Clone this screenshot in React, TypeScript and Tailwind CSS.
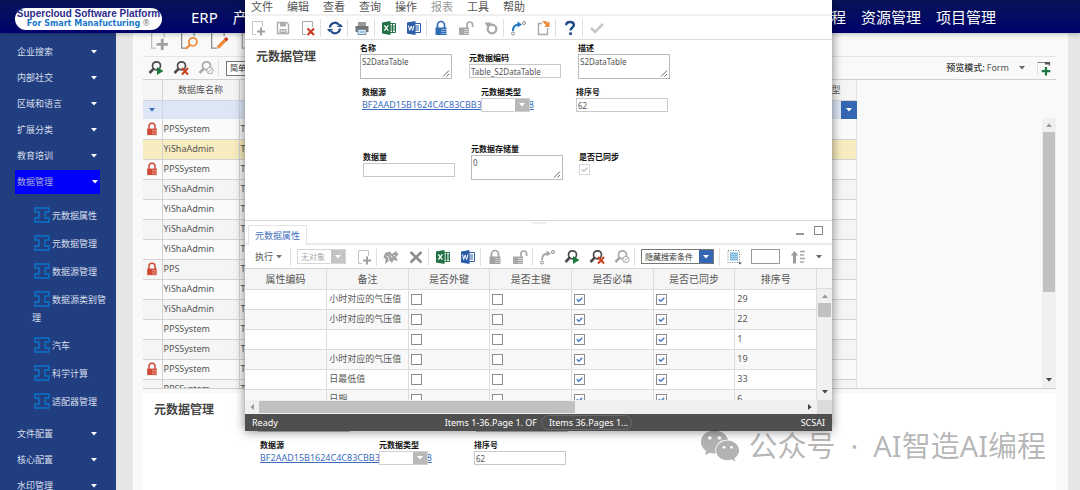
import { useId, type ReactNode } from "react";
import { FaWeixin } from "react-icons/fa";

/* ---------- small drawings ---------- */

function Svg({ className = "size-4", children }: { className?: string; children: ReactNode }) {
  return (
    <svg viewBox="0 0 16 16" fill="none" className={`shrink-0 ${className}`} aria-hidden="true">
      {children}
    </svg>
  );
}

function Caret({ className = "text-[#555]" }: { className?: string }) {
  return (
    <svg viewBox="0 0 6 4" className={`h-1 w-1.5 shrink-0 ${className}`} fill="currentColor" aria-hidden="true">
      <path d="M0 0h6L3 3.6z" />
    </svg>
  );
}

const Doc = () => <path d="M6 14.5H2.5v-13h10V7" stroke="#c4c4c4" />;

const NewIcon = () => (
  <Svg>
    <Doc />
    <path d="M11 7.5v8M7 11.5h8" stroke="#a0a0a0" strokeWidth="2" />
  </Svg>
);
const SaveIcon = () => (
  <Svg>
    <path d="M2.5 2.5h9l2 2v9h-11z" stroke="#adadad" strokeWidth="1.4" />
    <path d="M5 3h6v3.500H5zM4.500 9h7v4.500h-7z" fill="#adadad" />
    <path d="M5.500 11h5" stroke="#fff" />
  </Svg>
);
const DeleteDocIcon = () => (
  <Svg>
    <path d="M6 14.500H2.500v-13h10V7" stroke="#a9a9a9" />
    <path d="M7.500 8.500l6.500 6.500M14 8.500L7.500 15" stroke="#c8371b" strokeWidth="2" />
  </Svg>
);
const RefreshIcon = () => (
  <Svg>
    <path d="M3 7.500a5 5 0 0 1 9-2.700M13 8.500a5 5 0 0 1-9 2.700" stroke="#1f4e86" strokeWidth="2.200" />
    <path d="M9.800 7H16L13.500 3.800zM6.200 9H0l2.500 3.200z" fill="#1f4e86" />
  </Svg>
);
const PrintIcon = () => (
  <Svg>
    <path d="M4 2h8v4H4z" fill="#9b9b9b" />
    <path d="M1.500 6h13v6h-13z" fill="#757575" />
    <path d="M4 9.500h8v5H4z" fill="#e9f1f8" stroke="#6f8ea8" />
    <path d="M5.500 12h5" stroke="#4a90c4" />
  </Svg>
);
function OfficeIcon({ word = false }: { word?: boolean }) {
  const c = word ? "#2a5ca8" : "#217346";
  return (
    <Svg>
      <path d="M9 3.500h5.500v9H9" fill="#fff" stroke={c} />
      <path d={word ? "M9 6h4M9 8h4M9 10h4" : "M9 6h5M9 8h5M9 10h5M11.500 4v8"} stroke={c} />
      <path d="M1 2.500L9.500 1v14L1 13.500z" fill={c} />
      {word ? (
        <path d="M2.500 5.500l1.200 5L5.200 6l1.500 4.500 1.200-5" stroke="#fff" />
      ) : (
        <path d="M3.300 5.300l4 5.400M7.300 5.300l-4 5.400" stroke="#fff" strokeWidth="1.300" />
      )}
    </Svg>
  );
}
function LockIcon({ color, className }: { color: string; className?: string }) {
  return (
    <Svg className={className}>
      <path d="M4.500 8V5a3.500 3.500 0 0 1 7 0v3" stroke={color} strokeWidth="1.700" />
      <path d="M2.500 7.500h11v7.500h-11z" fill={color} />
      <path d="M8 9.500h5.500M8 11.500h5.500M8 13.500h5.500" stroke="#fff" strokeOpacity=".55" strokeWidth=".8" />
    </Svg>
  );
}
const UnlockIcon = () => (
  <Svg>
    <path d="M9 8V4.800a2.800 2.800 0 0 1 5.600 0V7" stroke="#a8a8a8" strokeWidth="1.700" />
    <path d="M1 7.500h10V15H1z" fill="#a8a8a8" />
    <path d="M6 9.500h5M6 11.500h5M6 13.500h5" stroke="#fff" strokeOpacity=".6" strokeWidth=".8" />
  </Svg>
);
const UndoIcon = () => (
  <Svg>
    <circle cx="9" cy="9" r="4.300" stroke="#a8a8a8" strokeWidth="2.300" />
    <path d="M1.500 2.500H8.500L5 8z" fill="#a8a8a8" />
  </Svg>
);
function FlowIcon({ color = "#2277c4" }: { color?: string }) {
  return (
    <Svg>
      <path d="M3 11c0-4 2-6.500 6-6.500" stroke={color} strokeWidth="2" />
      <path d="M7.500 1.500L12 4.500 7.500 7.500z" fill={color} />
      <circle cx="3" cy="13.500" r="1.500" stroke="#8b8b8b" />
      <circle cx="14" cy="3" r="1.500" stroke="#8b8b8b" />
    </Svg>
  );
}
const PasteIcon = () => (
  <Svg>
    <path d="M7 3.500H3.500v11h9V8" stroke="#a9a9a9" strokeWidth="1.400" />
    <path d="M7 1h4l1.500 1.500L14.500 1.500v5.500H9l2-1.500z" fill="#ee8b3c" />
  </Svg>
);
const HelpIcon = () => (
  <Svg>
    <path d="M4.200 5.200C4.200 3 5.800 2 8 2s3.900 1.100 3.900 3.100c0 2.400-3.200 2.500-3.400 5.400" stroke="#1f4a86" strokeWidth="2.400" />
    <path d="M7.200 12.300h2.700V15H7.200z" fill="#1f4a86" />
  </Svg>
);
const CheckIcon = () => (
  <Svg>
    <path d="M2 8l4 4 8-8" stroke="#c6c6c6" strokeWidth="2.600" />
  </Svg>
);
function FindIcon({ kind }: { kind: "play" | "x" | "no" }) {
  const c = kind === "no" ? "#a8a8a8" : "#4a4a4a";
  return (
    <Svg>
      <circle cx="8.500" cy="5.800" r="4" stroke={c} strokeWidth="1.700" />
      <path d="M5.700 8.700L1.500 13" stroke={c} strokeWidth="2.600" />
      {kind === "play" && <path d="M9 7l6.500 4L9 15z" fill="#1d7a3f" />}
      {kind === "x" && <path d="M9 8l6 6.500M15 8l-6 6.500" stroke="#cc3f1f" strokeWidth="2" />}
      {kind === "no" && (
        <>
          <circle cx="12" cy="10.500" r="3.200" fill="#fafafa" stroke={c} />
          <path d="M10 12.500l4-4" stroke={c} />
        </>
      )}
    </Svg>
  );
}
const AssignIcon = () => (
  <Svg>
    <path d="M2 4l5-1.500L9 5l4-3 2.500 3.500L13 8l2 4-4.500-1L9 14l-2.500-2.500L2 15l.5-5L.500 8.500z" fill="#a3a3a3" />
    <path d="M4 7l2 2M7.500 6.500l1.500 2M11 6l1 1.500M5 11l1.500-1" stroke="#fff" />
  </Svg>
);
const CrossIcon = () => (
  <Svg>
    <path d="M2.500 3l11 10.500M13.500 3l-11 10.500" stroke="#8e8e8e" strokeWidth="2.600" />
  </Svg>
);
const SelectRowsIcon = () => (
  <Svg>
    <path d="M2 1.500h11.500v12H2z" stroke="#777" strokeDasharray="1 1.500" />
    <path d="M4 3.500h8v8H4z" fill="#7db8e0" />
    <path d="M4 5.500h8M4 7.500h8M4 9.500h8" stroke="#bcdcf2" strokeWidth=".7" />
    <path d="M12 13.500h4l-2 2z" fill="#555" />
  </Svg>
);
const SortIcon = () => (
  <Svg>
    <path d="M4.500 14.500V5" stroke="#9b9b9b" strokeWidth="3" />
    <path d="M.8 6.500L4.500 2l3.700 4.500z" fill="#9b9b9b" />
    <path d="M10 2.500h5M10 6h4M10 9.500h5M10 13h4" stroke="#a9a9a9" strokeWidth="1.300" />
  </Svg>
);
const AddFormIcon = () => (
  <Svg>
    <path d="M1.500 14.500v-12" stroke="#ddd" />
    <path d="M1.500 2.500h12V6" stroke="#888" strokeWidth="1.200" />
    <path d="M9 2h5v2.500H9z" fill="#555" />
    <path d="M10 7v8.500M5.800 11.200h8.500" stroke="#1c7540" strokeWidth="2.200" />
  </Svg>
);
const BeamIcon = () => (
  <svg viewBox="0 0 16 16" fill="none" className="mt-0.5 mr-0.5 mb-px inline-block size-4 align-[-5px]" aria-hidden="true">
    <path d="M1 1h14v4h-4v6h4v4H1v-4h4V5H1z" stroke="#0a76cc" strokeWidth="1.300" />
  </svg>
);

/* ---------- controls ---------- */

function Tool({ label, children }: { label: string; children: ReactNode }) {
  return (
    <button type="button" aria-label={label} className="flex h-5 w-[25px] shrink-0 items-center justify-center">
      {children}
    </button>
  );
}

const Sep = () => <span className="mr-px h-[18px] w-px shrink-0 bg-[#e0e0e0]" />;

type ComboTone = "active" | "muted";

function Combo({ label, value, tone, className }: { label: string; value: string; tone: ComboTone; className: string }) {
  const active = tone === "active";
  return (
    <span className={`flex h-[15px] shrink-0 border bg-white ${active ? "border-[#777] text-[#333]" : "border-[#d6d6d6] text-[#aaa]"} ${className}`}>
      <select aria-label={label} className="min-w-0 flex-1 appearance-none pl-[3px] text-[8px] leading-[12px] outline-none">
        <option>{value}</option>
      </select>
      <span className={`flex w-3.5 items-center justify-center ${active ? "bg-[#3566b4]" : "bg-[#c4c4c4]"}`}>
        <Caret className="text-white" />
      </span>
    </span>
  );
}

function Tick({ label, checked, disabled = false }: { label: string; checked: boolean; disabled?: boolean }) {
  return (
    <span className="relative block size-[11px]">
      <input
        type="checkbox"
        aria-label={label}
        defaultChecked={checked}
        disabled={disabled}
        className="peer block size-[11px] appearance-none border border-[#8c8c8c] bg-white disabled:border-[#d8d8d8]"
      />
      <svg
        viewBox="0 0 11 11"
        fill="none"
        className={`pointer-events-none absolute inset-0 hidden peer-checked:block ${disabled ? "text-[#c4c4c4]" : "text-[#4477c4]"}`}
        aria-hidden="true"
      >
        <path d="M2.800 5.300l2 2 3.500-3.500" stroke="currentColor" strokeWidth="1.500" />
      </svg>
    </span>
  );
}

function Field({ label, value, kind, className = "" }: { label: string; value: string; kind: "text" | "area"; className?: string }) {
  const id = useId();
  return (
    <div className={`flex w-[92px] shrink-0 flex-col ${className}`}>
      <label htmlFor={id} className="h-[11px] text-[8px] leading-[10px] font-bold whitespace-nowrap text-[#111]">
        {label}
      </label>
      {kind === "text" ? (
        <input id={id} defaultValue={value} className="h-3.5 border border-[#c8c8c8] bg-white px-px text-[8px] leading-[12px] text-[#555] outline-none" />
      ) : (
        <span className="relative flex">
          <textarea id={id} defaultValue={value} className="h-[25px] w-full resize-none overflow-hidden border border-[#bbb] bg-white px-px py-0.5 text-[8px] leading-[10px] text-[#555] outline-none" />
          <svg viewBox="0 0 8 8" className="absolute right-0.5 bottom-0.5 size-2" fill="none" aria-hidden="true">
            <path d="M1 7.500l6-6M4.500 7.500L7 5" stroke="#666" />
          </svg>
        </span>
      )}
    </div>
  );
}

function Form() {
  const id = useId();
  return (
    <section className="flex bg-white pt-[3px] pb-10 pl-[11px]">
      <h2 className="w-[104px] shrink-0 pt-[5px] text-[12px] leading-[18px] font-bold text-[#444]">元数据管理</h2>
      <div>
        <div className="flex gap-[17px]">
          <Field label="名称" value="S2DataTable" kind="area" />
          <Field label="元数据编码" value="Table_S2DataTable" kind="text" className="pt-2.5" />
          <Field label="描述" value="S2DataTable" kind="area" />
        </div>
        <div className="mt-2 flex pl-0.5">
          <div className="flex w-[119px] flex-col">
            <span className="h-[11px] text-[8px] leading-[10px] font-bold text-[#111]">数据源</span>
            <a href="#source" className="text-[9px] leading-[14px] whitespace-nowrap text-[#3c6cc0] underline">
              BF2AAD15B1624C4C83CBB3726E50A938
            </a>
          </div>
          <div className="relative flex w-[95px] flex-col">
            <label htmlFor={id} className="h-[11px] text-[8px] leading-[10px] font-bold text-[#111]">
              元数据类型
            </label>
            <span className="flex h-3.5 w-[49px] border border-[#cfcfcf] bg-white">
              <select id={id} className="min-w-0 flex-1 appearance-none outline-none">
                <option />
              </select>
              <span className="flex w-3.5 items-center justify-center bg-[#b9b9b9]">
                <Caret className="text-white" />
              </span>
            </span>
          </div>
          <Field label="排序号" value="62" kind="text" />
        </div>
        <div className="mt-8 flex gap-4 pl-[3px]">
          <Field label="数据量" value="" kind="text" className="pt-2" />
          <Field label="元数据存储量" value="0" kind="area" />
          <div className="flex flex-col pt-2 text-[8px] leading-[10px] font-bold text-[#111]">
            <span className="h-3">是否已同步</span>
            <Tick label="是否已同步" checked disabled />
          </div>
        </div>
      </div>
    </section>
  );
}

function VScroll({ thumb, className = "" }: { thumb: string; className?: string }) {
  return (
    <div className={`flex flex-col items-center bg-[#f0f0f0] ${className}`}>
      <span className="flex h-3.5 items-center">
        <Caret className="rotate-180 text-[#999]" />
      </span>
      <span className="flex w-full flex-1 flex-col px-px">
        <span className={`bg-[#c1c1c1] ${thumb}`} />
      </span>
      <span className="flex h-4 items-center">
        <Caret className="text-[#444]" />
      </span>
    </div>
  );
}

/* ---------- side menu ---------- */

const topMenu = ["企业搜索", "内部社交", "区域和语言", "扩展分类", "教育培训"];
const dataMenu = ["元数据属性", "元数据管理", "数据源管理", "数据源类别管理", "汽车", "科学计算", "适配器管理"];
const endMenu = ["文件配置", "核心配置", "水印管理"];

function MenuItem({ text, active = false }: { text: string; active?: boolean }) {
  return (
    <li className="flex h-[26px] items-center pr-4 pl-[15px]">
      <button
        type="button"
        className={`flex h-6 w-full items-center justify-between pl-0.5 ${active ? "bg-[#0000fc] pr-0.5 text-[#a9b0cc]" : "pr-[3px]"}`}
      >
        {text}
        <Caret className="text-white" />
      </button>
    </li>
  );
}

function Sidebar() {
  return (
    <nav className="w-[116px] shrink-0 overflow-hidden bg-[#213f80] pt-1.5 text-[9px] leading-[18px] text-[#d9dfec]">
      <ul>
        {topMenu.map((t) => (
          <MenuItem key={t} text={t} />
        ))}
        <MenuItem text="数据管理" active />
      </ul>
      <ul className="py-1.5">
        {dataMenu.map((t) => (
          <li key={t} className="py-1 pr-2 pl-8">
            <a href="#menu" className="block">
              <span className="pl-0.5">
                <BeamIcon />
              </span>
              {t}
            </a>
          </li>
        ))}
      </ul>
      <ul>
        {endMenu.map((t) => (
          <MenuItem key={t} text={t} />
        ))}
      </ul>
    </nav>
  );
}

/* ---------- main list ---------- */

const databases = [
  { name: "PPSSystem", locked: true },
  { name: "YiShaAdmin", selected: true },
  { name: "PPSSystem", locked: true },
  { name: "YiShaAdmin" },
  { name: "YiShaAdmin" },
  { name: "YiShaAdmin" },
  { name: "YiShaAdmin" },
  { name: "PPS", locked: true },
  { name: "YiShaAdmin" },
  { name: "YiShaAdmin" },
  { name: "PPSSystem" },
  { name: "PPSSystem" },
  { name: "PPSSystem", locked: true },
  { name: "PPSSystem" },
];

function MainList() {
  return (
    <div className="flex h-[309px] overflow-hidden border-b border-[#cfcfcf]">
      <div className="flex-1">
        <table className="w-[714px] table-fixed border-collapse text-[9px] text-[#555]">
          <colgroup>
            <col className="w-[19px]" />
            <col className="w-[77px]" />
            <col />
            <col className="w-4" />
          </colgroup>
          <thead>
            <tr className="h-5 border-b border-[#d4d4d4] bg-[#f5f5f5]">
              <th className="border-r border-[#d4d4d4]" />
              <th className="border-r border-[#d4d4d4] p-0 font-normal">数据库名称</th>
              <th className="p-0 text-right font-normal">型</th>
              <th className="border-r border-[#e2e2e2]" />
            </tr>
            <tr className="h-[19px] bg-[#dce6f5]">
              <td className="border-r border-[#cdd6e4] p-0">
                <Caret className="mx-auto text-[#3566b4]" />
              </td>
              <td className="border-r border-[#cdd6e4] p-0" />
              <td className="p-0" />
              <td className="bg-[#3566b4] p-0">
                <Caret className="mx-auto text-white" />
              </td>
            </tr>
          </thead>
          <tbody>
            {databases.map((d, i) => (
              <tr key={i} className={`h-5 border-b border-[#d4d4d4] ${d.selected ? "bg-[#f7ecbf]" : i % 2 ? "bg-[#f5f5f5]" : "bg-[#fafafa]"}`}>
                <td className="border-r border-[#d4d4d4] p-0">{d.locked && <LockIcon color="#cf4a35" className="mx-auto size-3.5" />}</td>
                <td className="border-r border-[#d4d4d4] py-0 pr-0 pl-px leading-[18px]">{d.name}</td>
                <td className="py-0 pr-0 pl-px leading-[18px]">T</td>
                <td className="border-r border-[#e2e2e2] p-0" />
              </tr>
            ))}
          </tbody>
        </table>
      </div>
      <div className="flex w-3.5 flex-col pt-[38px]">
        <VScroll thumb="h-2/3" className="flex-1" />
      </div>
    </div>
  );
}

function MainToolbar() {
  return (
    <>
      <div className="flex h-6 items-end gap-2.5 overflow-hidden border-b border-[#e4e4e4] pb-1.5 pl-2">
        <button type="button" aria-label="新建">
          <Svg className="size-5">
            <path d="M4 14.500H.5v-13h10V6" stroke="#bdbdbd" />
            <path d="M9 7v9M4.500 11.500h9" stroke="#a0a0a0" strokeWidth="2.200" />
          </Svg>
        </button>
        <button type="button" aria-label="查看">
          <Svg className="size-5">
            <path d="M4 14.500H.5v-13h10V5" stroke="#8d8d8d" />
            <circle cx="9.500" cy="9.500" r="3.200" stroke="#ee8b3c" strokeWidth="1.500" />
            <path d="M7 12l-3 3" stroke="#ee8b3c" strokeWidth="1.800" />
          </Svg>
        </button>
        <button type="button" aria-label="编辑">
          <Svg className="size-5">
            <path d="M5 14.500H.5v-13h10V5" stroke="#8d8d8d" />
            <path d="M5.500 14l7-7" stroke="#ee8b3c" strokeWidth="2.600" />
            <path d="M11.500 8l1.500-1.500" stroke="#c8371b" strokeWidth="2.600" />
          </Svg>
        </button>
        <button type="button" aria-label="复制">
          <Svg className="size-5">
            <path d="M5 14.500H1v-13h10V5" stroke="#a9a9a9" />
          </Svg>
        </button>
      </div>
      <div className="flex h-[23px] items-center border-b border-[#cfcfcf] text-[9px]">
        <Tool label="搜索">
          <FindIcon kind="play" />
        </Tool>
        <Tool label="清除搜索">
          <FindIcon kind="x" />
        </Tool>
        <Tool label="停止搜索">
          <FindIcon kind="no" />
        </Tool>
        <Sep />
        <span className="ml-1.5 flex">
          <Combo label="搜索模式" value="简单" tone="active" className="w-[72px]" />
        </span>
        <button type="button" className="ml-auto flex items-center text-[#555]">
          <span className="font-medium text-[#333]">预览模式:</span>
          <span className="pl-0.5">Form</span>
          <Caret className="ml-2.5 text-[#666]" />
        </button>
        <span className="ml-1.5">
          <Tool label="新建表单">
            <AddFormIcon />
          </Tool>
        </span>
      </div>
    </>
  );
}

/* ---------- detail window ---------- */

const windowMenu = ["文件", "编辑", "查看", "查询", "操作", "报表", "工具", "帮助"];
const columns = ["属性编码", "备注", "是否外键", "是否主键", "是否必填", "是否已同步", "排序号"];
const attributes = [
  { note: "小时对应的气压值", order: 29 },
  { note: "小时对应的气压值", order: 22 },
  { note: "", order: 1 },
  { note: "小时对应的气压值", order: 19 },
  { note: "日最低值", order: 33 },
  { note: "日期", order: 6 },
];

function AttributeTable() {
  return (
    <div className="flex h-[131px] overflow-hidden">
      <div className="flex-1">
        <table className="w-full table-fixed border-collapse text-[9px] text-[#555]">
          <thead>
            <tr className="h-5 border-b border-[#dcdcdc] bg-[#f5f5f5] text-[10px]">
              {columns.map((c) => (
                <th key={c} className="border-r border-[#dcdcdc] p-0 leading-[18px] font-normal">
                  {c}
                </th>
              ))}
            </tr>
          </thead>
          <tbody>
            {attributes.map((a, i) => (
              <tr key={i} className={`h-5 border-b border-[#dcdcdc] ${i % 2 ? "bg-[#f8f8f8]" : "bg-white"}`}>
                <td className="border-r border-[#dcdcdc] p-0" />
                <td className="border-r border-[#dcdcdc] py-0 pr-0 pl-0.5 leading-[18px] whitespace-nowrap">{a.note}</td>
                {[false, false, true, true].map((v, k) => (
                  <td key={k} className="border-r border-[#dcdcdc] py-0 pr-0 pl-0.5">
                    <Tick label={columns[k + 2]} checked={v} />
                  </td>
                ))}
                <td className="border-r border-[#dcdcdc] py-0 pr-0 pl-0.5 leading-[18px]">{a.order}</td>
              </tr>
            ))}
          </tbody>
        </table>
      </div>
      <div className="flex w-[15px] shrink-0 flex-col">
        <span className="h-5 border-b border-[#dcdcdc] bg-[#f5f5f5]" />
        <VScroll thumb="h-3.5" className="flex-1" />
      </div>
    </div>
  );
}

function DetailWindow() {
  return (
    <section className="absolute top-0 right-[248px] left-[245px] bg-white shadow-[0_0_10px_rgba(0,0,0,0.5)]">
      <div className="flex h-4 items-start gap-3.5 overflow-hidden border-b-2 border-[#f0f0f0] pl-1.5 text-[11px] leading-[13px] text-[#555]">
        {windowMenu.map((m) => (
          <button key={m} type="button" className={m === "报表" ? "text-[#999]" : ""}>
            {m}
          </button>
        ))}
      </div>
      <div className="flex h-6 items-center border-b border-[#dcdcdc]">
        <Tool label="新建"><NewIcon /></Tool>
        <Tool label="保存"><SaveIcon /></Tool>
        <Tool label="删除"><DeleteDocIcon /></Tool>
        <Sep />
        <Tool label="刷新"><RefreshIcon /></Tool>
        <Sep />
        <Tool label="打印"><PrintIcon /></Tool>
        <Sep />
        <Tool label="导出 Excel"><OfficeIcon /></Tool>
        <Tool label="导出 Word"><OfficeIcon word /></Tool>
        <Sep />
        <Tool label="锁定"><LockIcon color="#2f6cb3" /></Tool>
        <Tool label="解锁"><UnlockIcon /></Tool>
        <Tool label="撤销"><UndoIcon /></Tool>
        <Sep />
        <Tool label="流程"><FlowIcon /></Tool>
        <Tool label="粘贴"><PasteIcon /></Tool>
        <Sep />
        <Tool label="帮助"><HelpIcon /></Tool>
        <Sep />
        <Tool label="确认"><CheckIcon /></Tool>
      </div>

      <Form />

      <div className="border-t border-[#d6d6d6]">
        <span className="mx-auto mt-px block h-0.5 w-3.5 bg-[#eee]" />
        <div className="flex h-[21px] items-end border-b-2 border-[#ececec] pl-[3px] text-[9px]">
          <button type="button" className="-mb-0.5 h-5 border border-b-0 border-[#e4e4e4] bg-white px-1.5 text-[#3f6fbd]">
            元数据属性
          </button>
          <span className="mb-2 ml-auto flex items-end gap-2.5 pr-[9px]">
            <button type="button" aria-label="最小化" className="h-0.5 w-2 bg-[#999]" />
            <button type="button" aria-label="最大化" className="size-[9px] border border-[#888]" />
          </span>
        </div>
      </div>
      <div className="flex h-6 items-center border-b border-[#d6d6d6] text-[9px]">
        <button type="button" className="mr-2 flex items-center gap-[3px] pl-2.5 text-[#555]">
          执行
          <Caret className="text-[#777]" />
        </button>
        <Sep />
        <span className="flex px-[5px]">
          <Combo label="对象" value="无对象" tone="muted" className="w-[49px]" />
        </span>
        <Tool label="新建属性"><NewIcon /></Tool>
        <Sep />
        <Tool label="分配"><AssignIcon /></Tool>
        <Tool label="移除"><CrossIcon /></Tool>
        <Sep />
        <Tool label="导出 Excel"><OfficeIcon /></Tool>
        <Tool label="导出 Word"><OfficeIcon word /></Tool>
        <Sep />
        <Tool label="锁定"><LockIcon color="#a0a0a0" /></Tool>
        <Tool label="解锁"><UnlockIcon /></Tool>
        <Sep />
        <Tool label="流程"><FlowIcon color="#a8a8a8" /></Tool>
        <Tool label="搜索"><FindIcon kind="play" /></Tool>
        <Tool label="清除搜索"><FindIcon kind="x" /></Tool>
        <Tool label="停止搜索"><FindIcon kind="no" /></Tool>
        <Sep />
        <span className="flex px-[5px]">
          <Combo label="搜索条件" value="隐藏搜索条件" tone="active" className="w-[73px]" />
        </span>
        <Sep />
        <Tool label="选择行"><SelectRowsIcon /></Tool>
        <input aria-label="页码" className="mx-[5px] h-[15px] w-[29px] shrink-0 border border-[#999] bg-white outline-none" />
        <Tool label="排序"><SortIcon /></Tool>
        <button type="button" aria-label="更多" className="ml-1.5">
          <Caret className="text-[#666]" />
        </button>
      </div>

      <AttributeTable />

      <div className="flex h-3.5 bg-[#f0f0f0]">
        <span className="flex w-3.5 items-center justify-center">
          <Caret className="rotate-90 text-[#999]" />
        </span>
        <span className="flex flex-1 py-px">
          <span className="w-[58%] bg-[#c1c1c1]" />
        </span>
        <span className="flex w-3.5 items-center justify-center">
          <Caret className="-rotate-90 text-[#444]" />
        </span>
        <span className="w-[15px] bg-[#dcdcdc]" />
      </div>
      <footer className="flex h-[17px] items-center bg-[#4f4f4f] px-[7px] text-[9px] leading-[15px] text-white">
        <span className="flex-1">Ready</span>
        <span className="flex items-center gap-1">
          Items 1-36.Page 1. OF
          <button type="button" className="h-[15px] rounded-full border border-[#6c6c6c] pr-[3px] pl-[7px] leading-[13px]">
            Items 36.Pages 1...
          </button>
        </span>
        <span className="flex-1 text-right">SCSAI</span>
      </footer>
    </section>
  );
}

/* ---------- page ---------- */

export default function App() {
  return (
    <div className="relative flex h-screen flex-col overflow-hidden bg-[#e6e6e6] font-['Noto_Sans','Noto_Sans_CJK_SC',sans-serif] text-[9px]">
      <header className="relative flex h-[33px] shrink-0 items-center bg-linear-to-b from-[#081257] to-[#00006c] pl-[15px] text-[15px] text-white shadow-[0_1px_5px_rgba(0,0,0,0.25)]">
        <a href="#home" className="mt-1 flex h-[22px] w-[147px] flex-col items-center rounded-full bg-white font-bold whitespace-nowrap">
          <span className="font-['Liberation_Sans',sans-serif] text-[10px] leading-[11px] text-[#2c2c8c]">Supercloud Software Platform</span>
          <span className="flex font-['DejaVu_Sans',sans-serif] text-[8px] leading-[9px] text-[#1878cc]">
            For Smart Manafucturing
            <span className="pl-0.5 font-normal text-[#777]">®</span>
          </span>
        </a>
        <nav className="flex flex-1 items-center gap-[15px] pr-[84px] pl-[29px] leading-[28px]">
          <a href="#erp">ERP</a>
          <a href="#product">产</a>
          <a href="#process" className="ml-auto">程</a>
          <a href="#resource">资源管理</a>
          <a href="#project">项目管理</a>
        </nav>
      </header>
      <div className="flex min-h-0 flex-1">
        <Sidebar />
        <main className="mr-3 ml-[17px] min-w-0 flex-1 bg-[#f9f9f9] pr-3 pl-2.5">
          <MainToolbar />
          <MainList />
          <div className="mt-1 bg-white">
            <Form />
          </div>
        </main>
      </div>
      <DetailWindow />
      <div className="pointer-events-none absolute right-[34px] bottom-6 flex items-center gap-2 text-[29px] leading-[30px] text-black/30">
        <FaWeixin className="size-10" aria-hidden="true" />
        <span className="flex gap-[15px]">
          <span>公众号</span>
          <span>·</span>
          <span>AI智造AI编程</span>
        </span>
      </div>
    </div>
  );
}
